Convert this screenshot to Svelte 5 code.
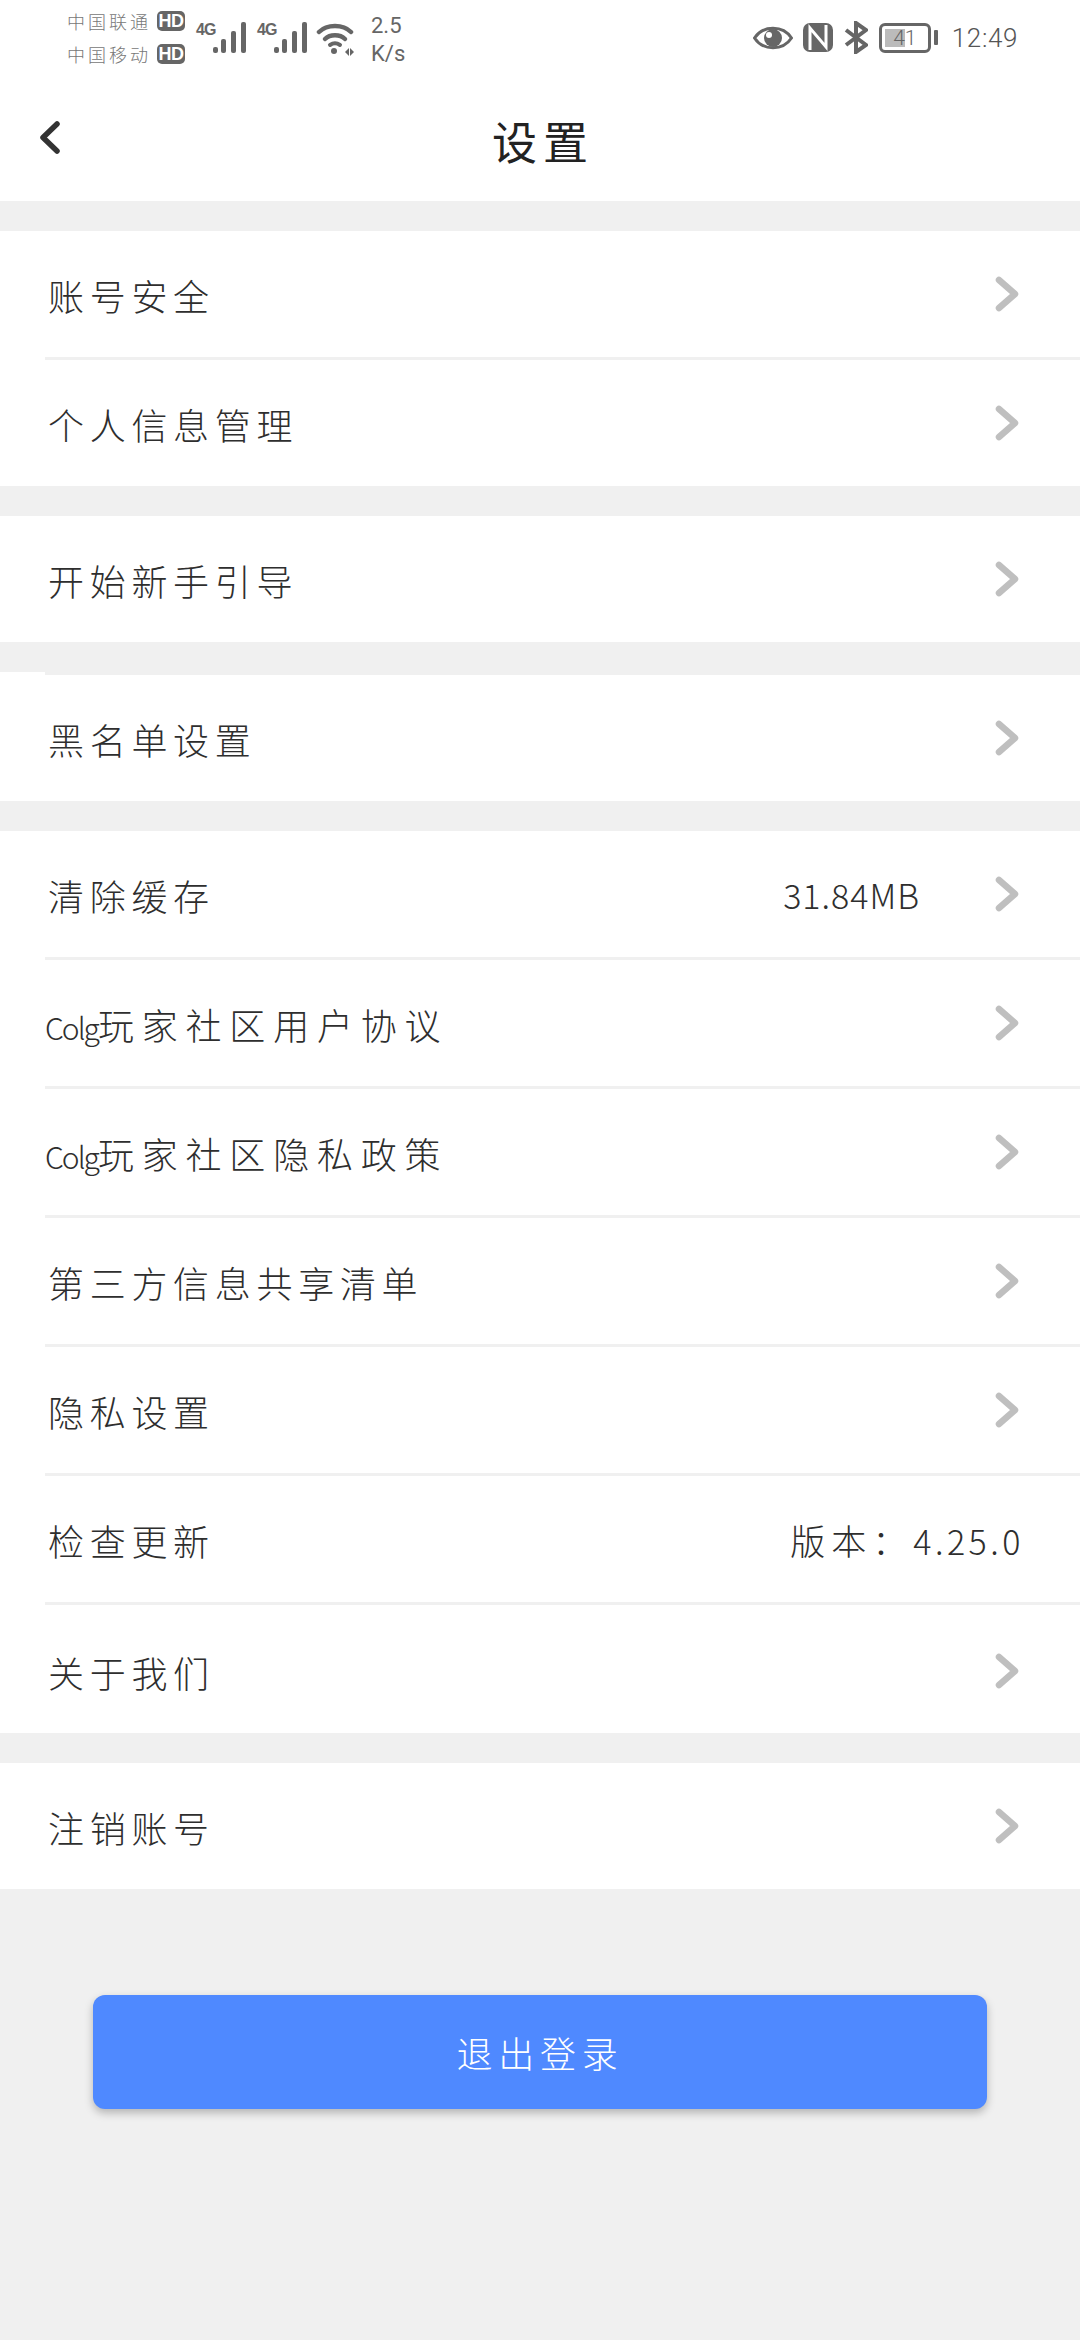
<script>
  const groups = [
    [{ label: '账号安全' }, { label: '个人信息管理', lined: true }],
    [{ label: '开始新手引导' }],
    [{ label: '黑名单设置', lined: true }],
    [
      { label: '清除缓存', value: '31.84MB' },
      { label: '玩家社区用户协议', latin: 'Colg', lined: true },
      { label: '玩家社区隐私政策', latin: 'Colg', lined: true },
      { label: '第三方信息共享清单', lined: true },
      { label: '隐私设置', lined: true },
      { label: '检查更新', version: '4.25.0', lined: true },
      { label: '关于我们', lined: true, tall: true }
    ],
    [{ label: '注销账号' }]
  ];
</script>

<div class="page">
  <div class="top">
    <div class="status">
      <div class="carriers">
        <div class="carrier"><span>中国联通</span><b>HD</b></div>
        <div class="carrier"><span>中国移动</span><b>HD</b></div>
      </div>
      {#each [0, 1] as s}
        <div class="signal">
          <span class="net">4G</span>
          <svg width="33" height="32" viewBox="0 0 33 32" fill="#666">
            <rect x="0" y="25" width="5" height="6" rx="2" />
            <rect x="8" y="17" width="5" height="14" rx="2" />
            <rect x="18" y="9" width="5" height="22" rx="2" />
            <rect x="28" y="0" width="5" height="31" rx="2" />
          </svg>
        </div>
      {/each}
      <svg class="wifi" width="38" height="36" viewBox="0 0 38 36" fill="none" stroke="#666" stroke-linecap="round">
        <path d="M3 12C11 4 27 4 35 12" stroke-width="4.5" />
        <path d="M9 19C14 14 24 14 29 19" stroke-width="4.5" />
        <path d="M14 25C17 23 21 23 24 25" stroke-width="4" />
        <circle cx="18" cy="31" r="3" fill="#666" stroke="none" />
        <path d="M29 32l4-4v8zM34 28l4 4-4 4z" fill="#666" stroke="none" />
      </svg>
      <div class="speed"><span>2.5</span><span>K/s</span></div>

      <div class="right">
        <svg width="40" height="26" viewBox="0 0 40 26">
          <path d="M1.5 13C10 0 30 0 38.5 13C30 26 10 26 1.5 13Z" fill="none" stroke="#666" stroke-width="3" />
          <circle cx="20" cy="13" r="9" fill="#666" />
          <circle cx="16" cy="10" r="3" fill="#fff" />
        </svg>
        <svg class="nfc" width="30" height="29" viewBox="0 0 30 29">
          <rect width="30" height="29" rx="7" fill="#666" />
          <path d="M7 27V5l16 19V2" fill="none" stroke="#fff" stroke-width="3" />
        </svg>
        <svg class="bt" width="24" height="33" viewBox="0 0 24 33" fill="none" stroke="#666" stroke-width="4">
          <path d="M2 9l20 15-10 7V2l10 7L2 24" />
        </svg>
        <div class="battery">
          <div class="level"></div>
          <span>41</span>
        </div>
        <div class="tip"></div>
        <span class="time">12:49</span>
      </div>
    </div>

    <div class="nav">
      <svg class="back" width="22" height="33" viewBox="0 0 22 33" fill="none" stroke="#333" stroke-width="5.5" stroke-linecap="round" stroke-linejoin="round">
        <path d="M18 3L4 16.5L18 30" />
      </svg>
      <h1>设置</h1>
    </div>
  </div>

  {#each groups as group}
    <section>
      {#each group as row}
        <div class="row" class:wide={row.latin} class:lined={row.lined} class:tall={row.tall}>
          <span class="label">{#if row.latin}<span class="latin">{row.latin}</span>{/if}{row.label}</span>
          {#if row.value}
            <span class="value">{row.value}</span>
          {/if}
          {#if row.version}
            <span class="version"><span class="prefix">版本：</span>{row.version}</span>
          {:else}
            <svg class="arrow" width="24" height="36" viewBox="0 0 24 36" fill="none" stroke="#bfbfbf" stroke-width="6.5" stroke-linecap="round" stroke-linejoin="round">
              <path d="M4 4L20 18L4 32" />
            </svg>
          {/if}
        </div>
      {/each}
    </section>
  {/each}

  <div class="logout">
    <button>退出登录</button>
  </div>
</div>

<style>
  :global(body) {
    margin: 0;
    background: #f0f0f0;
  }
  .page {
    min-height: 2340px;
    background: #f0f0f0;
    font-family: "Noto Sans CJK SC", "Noto Sans", sans-serif;
    font-weight: 300;
    color: #2e2e2e;
  }
  .top {
    height: 201px;
    background: #fff;
  }
  .status {
    height: 72px;
    display: flex;
    align-items: flex-start;
    padding-left: 67px;
    color: #666;
  }
  .carriers {
    width: 118px;
    margin-right: 11px;
    padding-top: 4px;
  }
  .carrier {
    height: 33px;
    display: flex;
    align-items: center;
    justify-content: space-between;
    font-size: 18px;
    letter-spacing: 3px;
    color: #777;
  }
  .carrier b {
    width: 28px;
    height: 20px;
    border-radius: 5px;
    background: #666;
    color: #fff;
    font-family: "Liberation Sans", sans-serif;
    font-size: 18px;
    font-weight: 700;
    line-height: 20px;
    letter-spacing: -0.5px;
    text-align: center;
  }
  .signal {
    width: 50px;
    margin-right: 11px;
    padding-top: 22px;
    display: flex;
    align-items: flex-start;
  }
  .net {
    width: 17px;
    font-family: "Liberation Sans Narrow", "Liberation Sans", sans-serif;
    font-size: 16px;
    font-weight: 700;
    line-height: 15px;
    letter-spacing: -1px;
  }
  .wifi {
    margin: 20px 17px 0 -2px;
  }
  .speed {
    display: flex;
    flex-direction: column;
    padding-top: 12px;
    font-family: Roboto, sans-serif;
    font-size: 22px;
    font-weight: 400;
    line-height: 28px;
    color: #666;
  }
  .right {
    margin-left: auto;
    padding: 21px 62px 0 0;
    display: flex;
    align-items: center;
    height: 33px;
  }
  .nfc {
    margin-left: 10px;
  }
  .bt {
    margin-left: 11px;
  }
  .battery {
    position: relative;
    width: 52px;
    height: 30px;
    margin-left: 11px;
    box-sizing: border-box;
    border: 3px solid #666;
    border-radius: 6px;
    font-family: Roboto, sans-serif;
    font-size: 21px;
    line-height: 24px;
    text-align: center;
    color: #666;
  }
  .level {
    position: absolute;
    left: 3px;
    top: 3px;
    width: 20px;
    height: 18px;
    background: #bbb;
  }
  .battery span {
    position: relative;
  }
  .tip {
    width: 4px;
    height: 15px;
    margin: 0 14px 0 3px;
    border-radius: 1px;
    background: #666;
  }
  .time {
    font-family: Roboto, sans-serif;
    font-size: 26px;
    font-weight: 300;
    letter-spacing: 0.6px;
    color: #555;
  }
  .nav {
    position: relative;
    height: 129px;
    display: flex;
    justify-content: center;
  }
  .back {
    position: absolute;
    left: 39px;
    top: 49px;
  }
  h1 {
    margin: 0;
    padding: 38px 0 0 6px;
    font-size: 45px;
    font-weight: 400;
    line-height: 62px;
    letter-spacing: 6px;
    color: #222;
  }
  section {
    margin-top: 30px;
    background: #fff;
  }
  .row {
    position: relative;
    height: 126px;
    display: flex;
    align-items: center;
    padding: 0 61px 0 48px;
    font-size: 36px;
    letter-spacing: 5.7px;
  }
  .lined {
    height: 129px;
    padding-top: 3px;
    box-sizing: border-box;
  }
  .lined.tall {
    height: 131px;
    padding-top: 6px;
  }
  .lined::before {
    content: "";
    position: absolute;
    left: 45px;
    right: 0;
    top: 0;
    height: 3px;
    background: #f0f0f0;
  }
  .wide {
    padding-left: 45px;
    letter-spacing: 7.8px;
  }
  .latin {
    font-size: 30px;
    letter-spacing: -2px;
  }
  .label {
    flex: 1;
    padding-top: 2px;
  }
  .value {
    margin-right: 75px;
    font-size: 34px;
    letter-spacing: 1px;
  }
  .version {
    margin-right: -5px;
    font-size: 34px;
    letter-spacing: 3.5px;
  }
  .prefix {
    font-size: 35px;
    letter-spacing: 6px;
  }
  .logout {
    padding: 106px 93px 0;
  }
  button {
    display: block;
    width: 100%;
    height: 114px;
    padding-left: 6px;
    border: none;
    border-radius: 12px;
    background: #4f89ff;
    box-shadow: 0 4px 8px rgba(0, 0, 0, 0.25);
    color: #fff;
    font-family: inherit;
    font-size: 36px;
    font-weight: 300;
    letter-spacing: 5.7px;
  }
</style>
